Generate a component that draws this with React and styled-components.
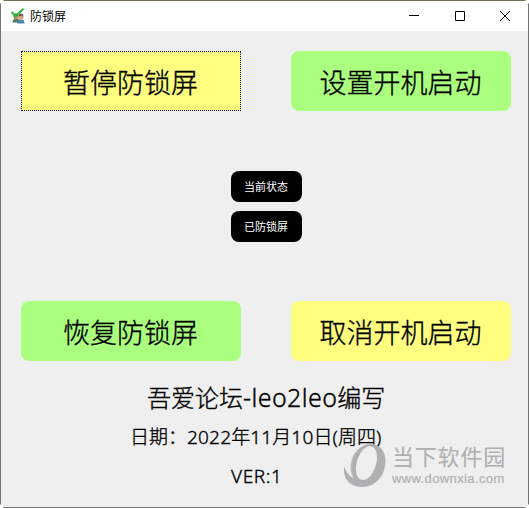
import React from "react";
import styled, { createGlobalStyle } from "styled-components";

const GlobalStyle = createGlobalStyle`
  * { box-sizing: border-box; }
  body { margin: 0; background: #fff; overflow: hidden; }
`;

const Window = styled.div`
  position: relative;
  width: 529px;
  height: 508px;
  display: flex;
  flex-direction: column;
  background: #efefef;
  border: 1px solid #737373;
  border-top-color: #746c5c;
  color: #000;
  font-family: "Noto Sans", "Noto Sans CJK SC", sans-serif;
`;

const Corner = styled.i`
  position: absolute;
  width: 4px;
  height: 4px;
  background: #fff;
  ${(p) => p.$v}: -1px;
  ${(p) => p.$h}: -1px;
  clip-path: ${(p) => p.$clip};
`;

const TitleBar = styled.header`
  height: 30px;
  flex: none;
  display: flex;
  align-items: center;
  background: #fff;
  padding-left: 9px;
`;

const Caption = styled.span`
  flex: 1;
  margin-left: 4px;
  padding-bottom: 1px;
  font: 12px/16px "Noto Sans CJK SC", sans-serif;
`;

const Control = styled.span`
  width: 45.5px;
  height: 30px;
  display: flex;
  align-items: center;
  justify-content: center;
  svg { display: block; }
`;

const Content = styled.main`
  flex: 1;
  display: flex;
  flex-direction: column;
  padding: 20px 17px 0 20px;
`;

const ButtonRow = styled.div`
  display: flex;
  gap: 50px;
`;

const ActionButton = styled.button`
  width: 220px;
  height: 60px;
  padding: 2px 1px 0 0;
  border: ${(p) => (p.$focused ? "1px dotted #00007f" : "0")};
  border-radius: ${(p) => (p.$focused ? "0" : "8px")};
  background: ${(p) => (p.$tone === "yellow" ? "#ffff7f" : "#aaff7f")};
  color: #000;
  font: 300 27px/56px "Noto Sans CJK SC", sans-serif;
  -webkit-text-stroke: 0.35px #000;
`;

const StatusColumn = styled.div`
  height: 190px;
  padding: 60px 0 0 210px;
  display: flex;
  flex-direction: column;
  gap: 9px;
`;

const StatusBadge = styled.span`
  width: 71px;
  height: 31px;
  padding-right: 1px;
  border-radius: 8px;
  background: #000;
  color: #fff;
  text-align: center;
  font: 11px/31px "Noto Sans CJK SC", sans-serif;
`;

const InfoLine = styled.div`
  height: ${(p) => p.$height}px;
  line-height: ${(p) => p.$height}px;
  margin-top: ${(p) => p.$top}px;
  padding-left: ${(p) => p.$left}px;
  font-size: ${(p) => p.$size}px;
  font-family: "Noto Sans CJK SC", sans-serif;
  font-weight: 300;
  -webkit-text-stroke: 0.35px #000;
  white-space: nowrap;
`;

const Latin = styled.span`
  font-family: "Noto Sans", sans-serif;
  font-weight: 300;
  font-size: ${(p) => p.$size || 19}px;
  letter-spacing: ${(p) => p.$spacing || 0.2}px;
  line-height: 1;
`;

const Watermark = styled.div`
  position: absolute;
  left: 342px;
  top: 442px;
  display: flex;
  color: #b0b0b2;
`;

const WatermarkText = styled.div`
  display: flex;
  flex-direction: column;
  gap: 2px;
  margin-left: 5px;
`;

const WatermarkName = styled.div`
  height: 26px;
  font: 400 22px/24px "Noto Sans CJK SC", sans-serif;
  letter-spacing: 0.8px;
  white-space: nowrap;
  -webkit-text-stroke: 0.1px #b0b0b2;
`;

const WatermarkUrl = styled.div`
  font: 13px/16px "Liberation Sans", sans-serif;
  letter-spacing: 0.38px;
  -webkit-text-stroke: 0.2px #b0b0b2;
`;

function AppIcon() {
  return (
    <svg width="16" height="16" viewBox="0 0 16 16">
      <path d="M2.500 14.500c0-3 1.500-4 4-4s3.500 1.500 3.500 4z" fill="#55795c" />
      <circle cx="6" cy="9" r="2.500" fill="#b98b6c" />
      <path d="M3.500 8.500c0-4 5-4 5 0l-2-1z" fill="#5c5148" />
      <path d="M7 15.500c0-3 1.500-4 4-4s3.500 1.500 3.500 4z" fill="#4d86ad" />
      <circle cx="11" cy="9" r="2.500" fill="#d5a081" />
      <path d="M8.500 8.500c0-4 5-4 5 0l-2-1z" fill="#6b5248" />
      <path d="M1.500 4 5.500 8 13.500.8" fill="none" stroke="#22b838" strokeWidth="2" />
    </svg>
  );
}

function WatermarkLogo() {
  return (
    <svg width="44" height="46" viewBox="0 0 44 46" fill="currentColor">
      <path
        fillRule="evenodd"
        d="M25 1C36 0 42.500 7 42.500 18C42.500 32 33 44 19 44C9 44 2 38 1 29L1 23.500C3 29 6 33 10 35C4 24 9 5 25 1ZM26 3C18 5 13 17 13 26C13 33 16 37 20 37C28 37 34 24 34 14C34 7 31 3 26 3Z"
      />
      <path d="M10 14C7 20 7 28 10 34.500" fill="none" stroke="#dedede" strokeWidth=".7" />
    </svg>
  );
}

export default function App() {
  return (
    <>
      <GlobalStyle />
      <Window>
        <TitleBar>
          <AppIcon />
          <Caption>防锁屏</Caption>
          <Control>
            <svg width="10" height="10"><path d="M0 4.500h10" stroke="#000" /></svg>
          </Control>
          <Control>
            <svg width="10" height="10"><path d="M.5.5h9v9h-9z" fill="none" stroke="#000" /></svg>
          </Control>
          <Control>
            <svg width="10" height="10"><path d="m0 0 10 10M10 0 0 10" stroke="#000" /></svg>
          </Control>
        </TitleBar>
        <Content>
          <ButtonRow>
            <ActionButton $tone="yellow" $focused>暂停防锁屏</ActionButton>
            <ActionButton $tone="green">设置开机启动</ActionButton>
          </ButtonRow>
          <StatusColumn>
            <StatusBadge>当前状态</StatusBadge>
            <StatusBadge>已防锁屏</StatusBadge>
          </StatusColumn>
          <ButtonRow>
            <ActionButton $tone="green">恢复防锁屏</ActionButton>
            <ActionButton $tone="yellow">取消开机启动</ActionButton>
          </ButtonRow>
          <InfoLine $height={34} $top={19} $left={126} $size={24}>
            吾爱论坛<Latin $size={25} $spacing={0.4}>-leo2leo</Latin>编写
          </InfoLine>
          <InfoLine $height={30} $top={7} $left={109} $size={19}>
            日期：<Latin>2022</Latin>年<Latin>11</Latin>月<Latin>10</Latin>日<Latin>(</Latin>周四<Latin>)</Latin>
          </InfoLine>
          <InfoLine $height={30} $top={9} $left={210} $size={19}>
            <Latin $spacing={0.6}>VER:1</Latin>
          </InfoLine>
        </Content>
        <Watermark>
          <WatermarkLogo />
          <WatermarkText>
            <WatermarkName>当下软件园</WatermarkName>
            <WatermarkUrl>www.downxia.com</WatermarkUrl>
          </WatermarkText>
        </Watermark>
        <Corner $v="top" $h="left" $clip="polygon(0 0,100% 0,0 100%)" />
        <Corner $v="top" $h="right" $clip="polygon(0 0,100% 0,100% 100%)" />
        <Corner $v="bottom" $h="left" $clip="polygon(0 0,100% 100%,0 100%)" />
        <Corner $v="bottom" $h="right" $clip="polygon(100% 0,100% 100%,0 100%)" />
      </Window>
    </>
  );
}
